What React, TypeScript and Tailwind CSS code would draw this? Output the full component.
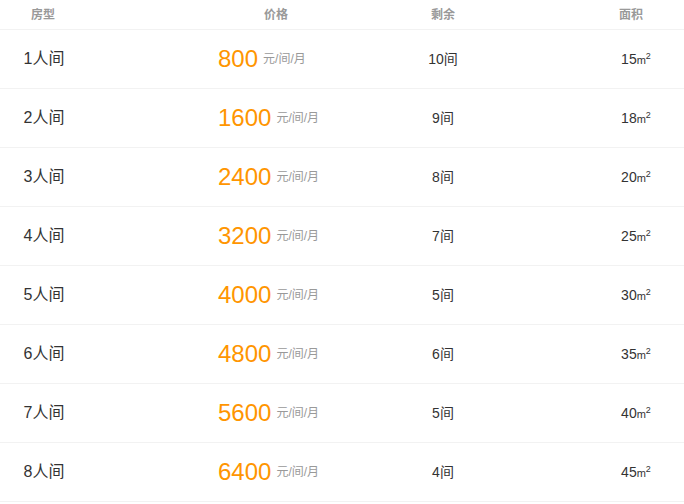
import React from "react";

const rooms = [
  { type: "1人间", price: 800, left: 10, area: 15 },
  { type: "2人间", price: 1600, left: 9, area: 18 },
  { type: "3人间", price: 2400, left: 8, area: 20 },
  { type: "4人间", price: 3200, left: 7, area: 25 },
  { type: "5人间", price: 4000, left: 5, area: 30 },
  { type: "6人间", price: 4800, left: 6, area: 35 },
  { type: "7人间", price: 5600, left: 5, area: 40 },
  { type: "8人间", price: 6400, left: 4, area: 45 },
];

const font = {
  fontFamily: '"Liberation Sans", Arial, "Noto Sans CJK SC", sans-serif',
};

export default function App() {
  return (
    <div className="w-[684px] h-[504px] bg-white" style={font}>
      {/* header */}
      <div className="flex items-center h-[30px] border-b border-[#f2f2f2] text-[12px] font-bold text-[#999]">
        <div className="w-[86px] text-center">房型</div>
        <div className="ml-[90px] w-[200px] text-center">价格</div>
        <div className="ml-[22px] w-[90px] text-center">剩余</div>
        <div className="ml-[98px] w-[90px] text-center">面积</div>
      </div>

      {rooms.map((r) => (
        <div
          key={r.type}
          className="flex items-center h-[59px] border-b border-[#f2f2f2]"
        >
          <div className="w-[86px] pl-[2px] text-center text-[16px] text-[#333]">
            {r.type}
          </div>
          <div className="ml-[90px] w-[200px] pl-[42px] flex items-center">
            <span className="text-[24px] text-[#ff9500] leading-none">
              {r.price}
            </span>
            <span className="ml-[5px] text-[12px] text-[#999] leading-none">
              元/间/月
            </span>
          </div>
          <div className="ml-[22px] w-[90px] text-center text-[14px] text-[#333]">
            {r.left}间
          </div>
          <div className="ml-[100px] w-[90px] pl-[6px] text-center text-[14px] text-[#333]">
            {r.area}
            <span className="text-[11px]">m</span>
            <span className="relative -top-[5px] text-[9px]">2</span>
          </div>
        </div>
      ))}
    </div>
  );
}
